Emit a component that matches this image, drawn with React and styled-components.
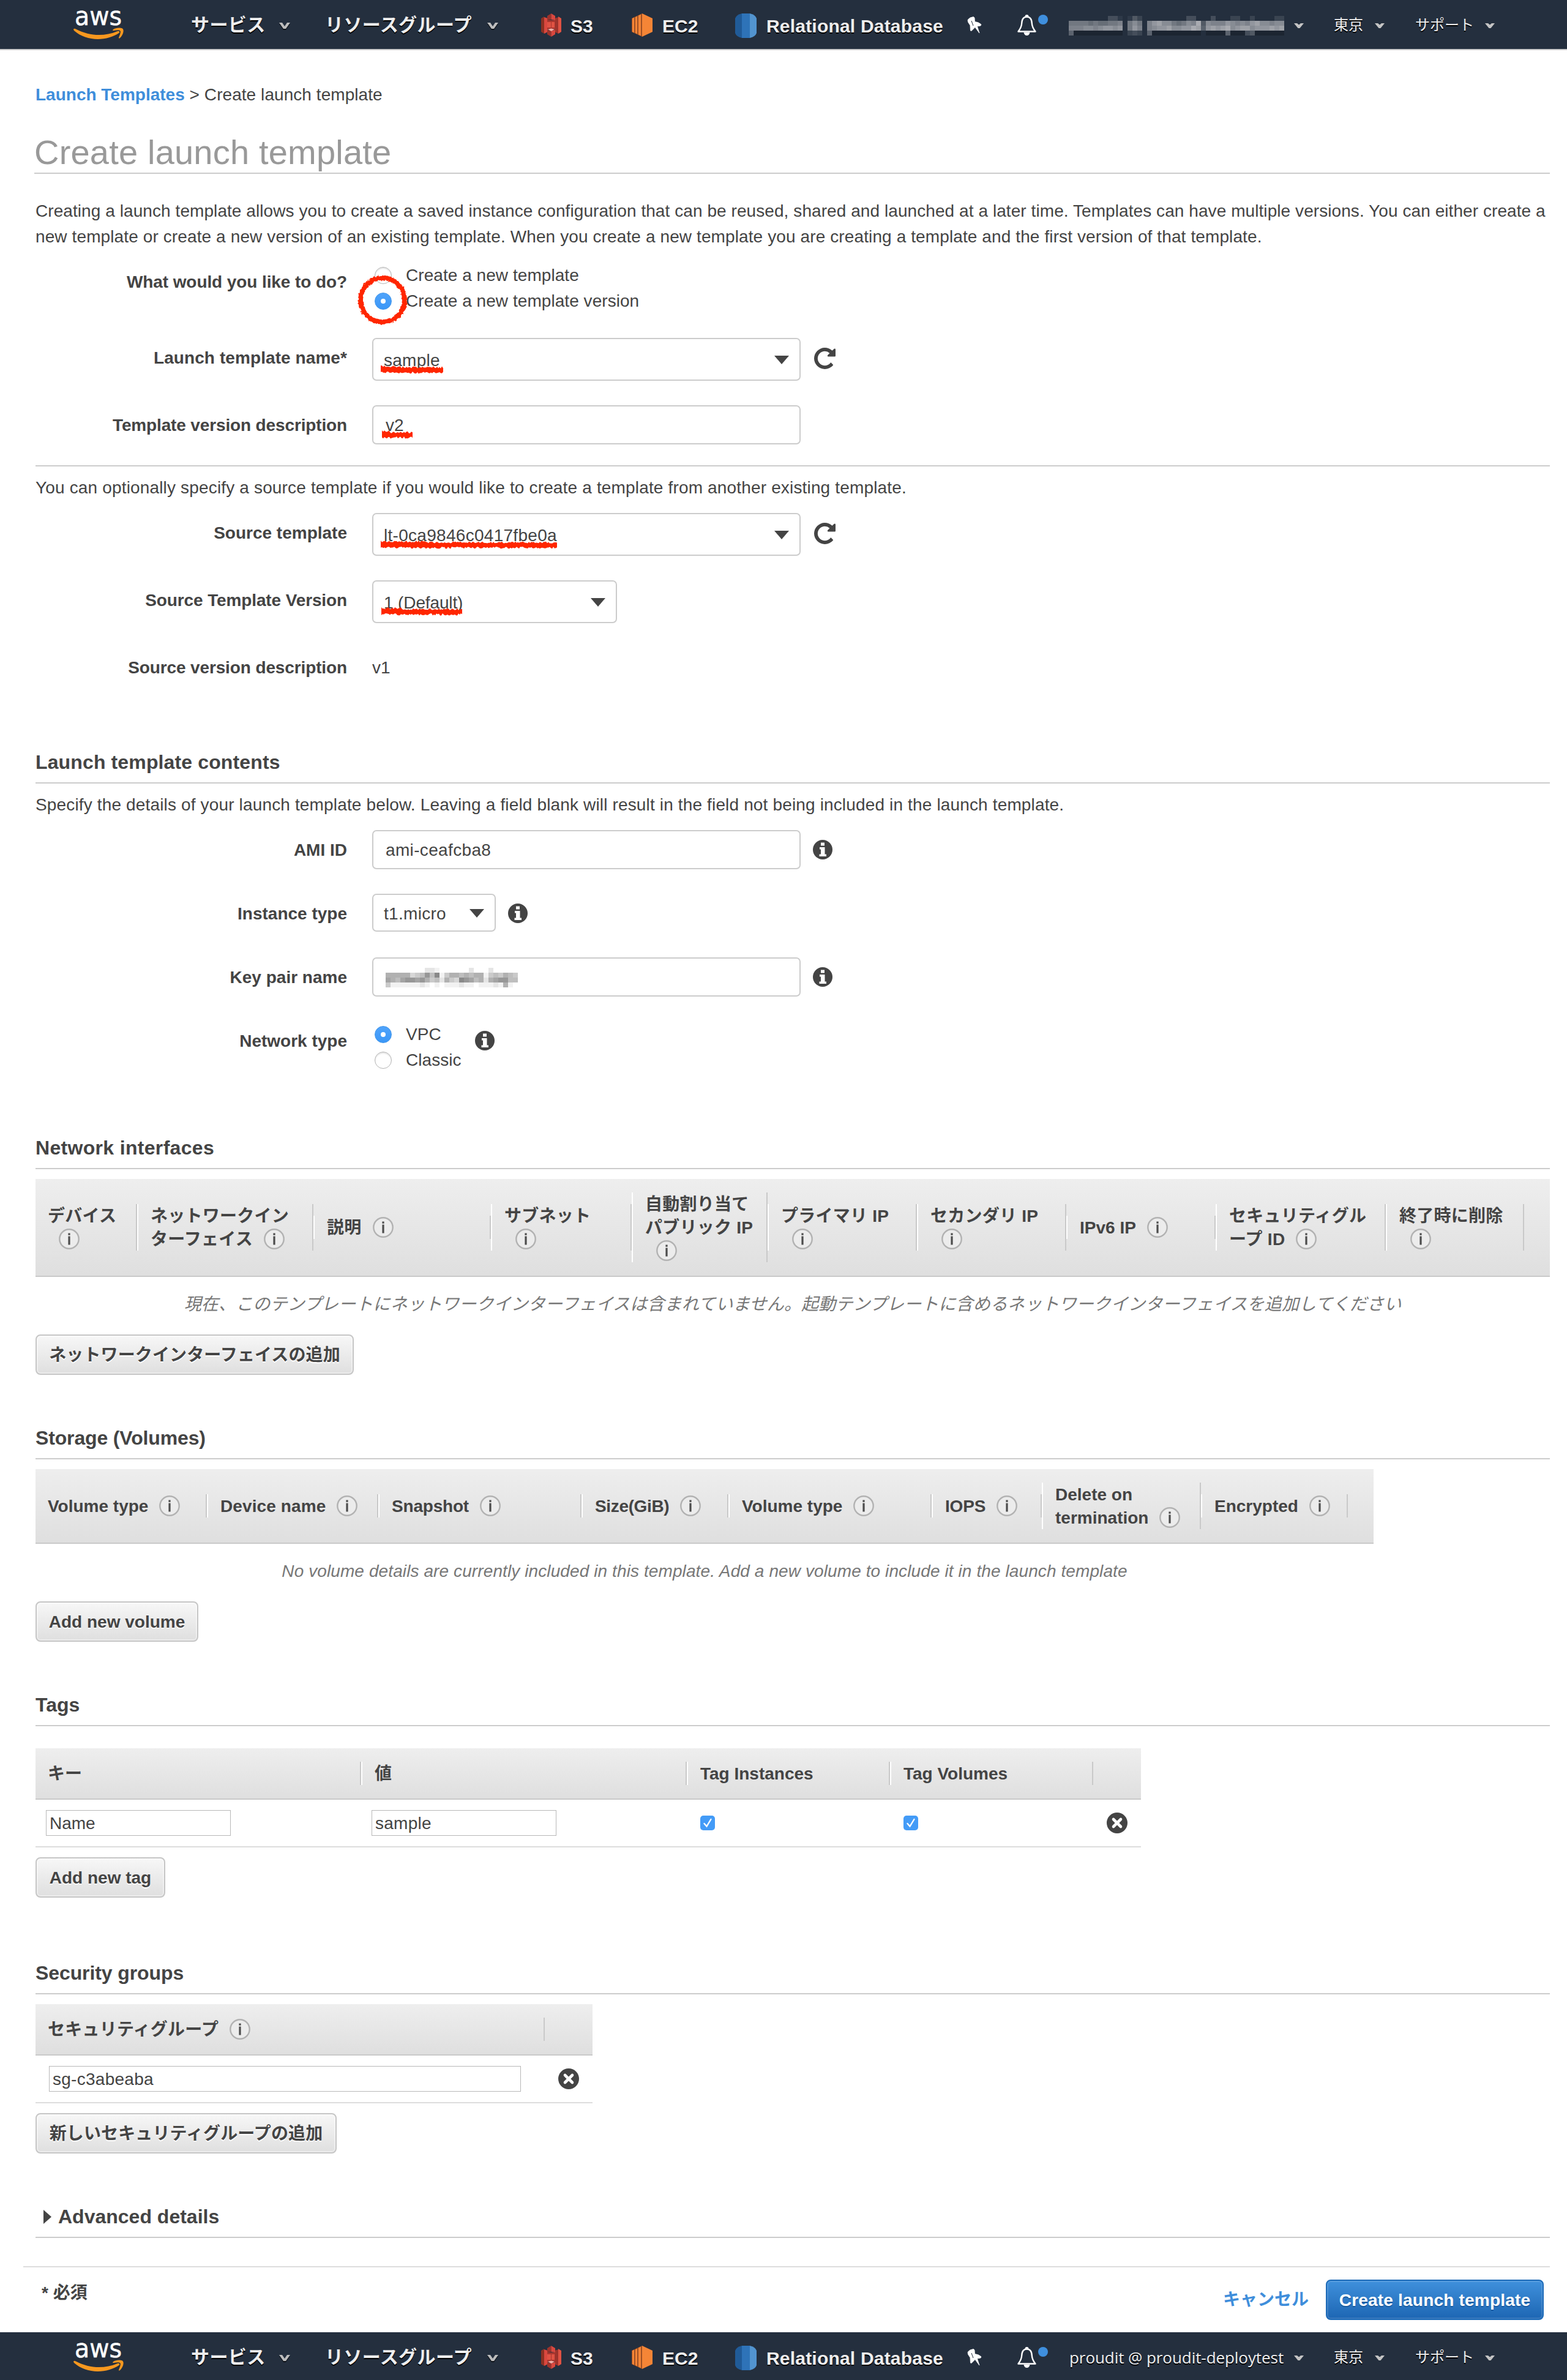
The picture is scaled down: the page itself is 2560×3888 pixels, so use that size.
import React from 'react';
import styled, { createGlobalStyle } from 'styled-components';

const sans = '"Liberation Sans", "Noto Sans CJK JP", Arial, sans-serif';

const GlobalStyle = createGlobalStyle`
  *, *::before, *::after { box-sizing: border-box; }
  body {
    margin: 0;
    background: #fff;
    color: #444;
    font: 28px/42px ${sans};
  }
`;

/* ---------- navigation ---------- */

const NavBar = styled.nav`
  height: ${(p) => (p.$footer ? 78 : 82)}px;
  overflow: hidden;
  background: #242f3e;
  border-bottom: ${(p) => (p.$footer ? 'none' : '2px solid #ccc')};
`;

const NavInner = styled.div`
  height: 80px;
  display: flex;
  align-items: center;
  padding-left: 120px;
  color: #eee;
`;

const NavItem = styled.div`
  display: flex;
  align-items: center;
  flex: none;
  gap: ${(p) => p.$gap || 0}px;
  margin-left: ${(p) => p.$ml || 0}px;
`;

const NavText = styled.span`
  width: ${(p) => p.$w}px;
  white-space: nowrap;
  font-size: 30px;
  line-height: 40px;
  font-weight: bold;
  letter-spacing: ${(p) => p.$ls || 0}px;
  padding-top: ${(p) => (p.$service ? 6 : 1)}px;
  text-shadow: 0 2px 0 #000;
`;

const NavSmall = styled(NavText)`
  font-size: 24px;
  font-weight: normal;
`;

const NavUser = styled(NavText)`
  font-family: "Open Sans", sans-serif;
  font-size: 26px;
  font-weight: normal;
  letter-spacing: -0.07px;
  padding-left: 1px;
`;

const Icon = styled.svg`
  display: block;
  flex: none;
  overflow: visible;
  margin-top: ${(p) => p.$mt || 0}px;
  margin-left: ${(p) => p.$ml || 0}px;
`;

const MosaicGrid = styled.div`
  display: grid;
  grid-template-columns: repeat(${(p) => p.$cols}, 8px);
  grid-auto-rows: 8px;
  width: ${(p) => p.$w}px;
  margin-top: ${(p) => p.$mt || 0}px;
`;

const Cell = styled.i`
  display: block;
`;

function Mosaic({ rows, rgb, w, mt, k = 15 }) {
  return (
    <MosaicGrid $cols={rows[0].length} $w={w} $mt={mt}>
      {rows.flatMap((row, y) =>
        row.split('').map((c, x) => (
          <Cell
            key={`${x}-${y}`}
            style={{
              background:
                c === 'x' ? 'rgba(0,0,0,.2)' : c === '.' ? 'transparent' : `rgba(${rgb},${parseInt(c, 16) / k})`,
            }}
          />
        ))
      )}
    </MosaicGrid>
  );
}

const userMosaic = [
  '........331.142.........33...3...22..2....22',
  '77776766778.797.8ab9976798c49888a9898ab99899',
  '8889989aa9a.7a8.89aab99aacb5ababc9abb9aaabab',
  '5xxxxxxxxxx.232.5xxxxxxxxxx.xxxx5xxx34xxxxxx',
];

const keyMosaic = [
  '........221......2...2.....',
  '666663458591466565661454654',
  '765788786452643987562678855',
  '411111121.1.111211.1112161.',
];

const Chevron = () => (
  <Icon $mt={6} width="18" height="12" viewBox="0 0 18 12">
    <path d="M0 2h5l4 6 4-6h5l-7 10H7z" fill="#000" opacity=".6" />
    <path d="M0 0h5l4 6 4-6h5l-7 10H7z" fill="#bdbdbd" />
  </Icon>
);

const SmallChevron = () => (
  <Icon $mt={4} width="16" height="9" viewBox="0 0 16 9">
    <path d="M0 0h5l3 2.500 3-2.500h5L9.500 8h-3z" fill="#c4c4c4" />
  </Icon>
);

const Logo = () => (
  <Icon width="82" height="48" viewBox="0 0 82 48">
    <text
      x="2"
      y="24.500"
      fill="#fff"
      stroke="#fff"
      strokeWidth="0.500"
      fontFamily='"DejaVu Sans", sans-serif'
      fontSize="43"
      textLength="77"
      lengthAdjust="spacingAndGlyphs"
    >
      aws
    </text>
    <g fill="#f7981f">
      <path d="M0 32Q1 30 4 31.500C26 43 50 44 72 35Q76 34 75 37.500C54 52 21 52 1 34Z" />
      <path d="M80 30.500C76 29 69 29 64.500 32.500Q63 34.500 66 34C71 33 75.500 33 76.500 34.500C77.500 36 76 41 74 45.500Q74 47.500 76 46C81 41.500 83.500 33 80 30.500Z" />
    </g>
  </Icon>
);

const S3Icon = () => (
  <Icon $mt={2} width="33" height="38" viewBox="0 0 33 38">
    <path d="M0 8l5-3v28l-5-3z" fill="#8c3123" />
    <path d="M33 8l-5-3v28l5-3z" fill="#e05243" />
    <path d="M5 6l6 2v22l-6 3z" fill="#d9483f" />
    <path d="M28 6l-6 2v22l6 3z" fill="#9c332c" />
    <path d="M16.500 0L10 4v7l6.500-1z" fill="#9c332c" />
    <path d="M16.500 0L23 4v7l-6.500-1z" fill="#d9483f" />
    <path d="M16.500 38L10 34v-7l6.500 1z" fill="#9c332c" />
    <path d="M16.500 38L23 34v-7l-6.500 1z" fill="#d9483f" />
    <path d="M10 11h13v15H10z" fill="#a8362f" />
    <path d="M10 14h6v9h-6zM17 14h5v9h-5z" fill="#e05243" />
    <path d="M11 26l5.500-1.500L22 26l-5.500 3z" fill="#efb1aa" />
  </Icon>
);

const Ec2Icon = () => (
  <Icon $mt={2} width="34" height="38" viewBox="0 0 34 38">
    <path d="M0 8l17-8v38L0 30z" fill="#9d5025" />
    <path d="M1 8l3-1.500v25L1 30zM6 6l3-1.500v29L6 32zM11 3.500L15 1.500v35l-4-2z" fill="#f58536" />
    <path d="M17 0l17 8v22l-17 8z" fill="#f58536" />
  </Icon>
);

const RdsIcon = () => (
  <Icon $mt={4} width="35" height="40" viewBox="0 0 35 40">
    <path d="M0 8Q2 2 11 0v40Q2 38 0 32z" fill="#205b98" />
    <path d="M35 8Q33 2 24 0v40q9-2 11-8z" fill="#5294cf" />
    <path d="M11 0h13v40H11z" fill="#2e73b8" />
  </Icon>
);

const PinIcon = () => (
  <Icon $mt={1} width="24" height="27" viewBox="0 0 24 27">
    <path
      d="M1 5.500Q4 1 10.500 0.500L12 2L12.500 8.500Q19 9 23 13L22 15L16.500 16L20 27L13 17.500L7 23.500L5.500 23L5 14.500L1.500 9Z"
      fill="#fff"
      stroke="#fff"
      strokeWidth="0.800"
      strokeLinejoin="round"
    />
    <path d="M7 7l3 8" stroke="#242f3e" strokeWidth="1" />
  </Icon>
);

const BellIcon = () => (
  <Icon $mt={2} width="50" height="34" viewBox="0 0 50 34">
    <path d="M13.500 3a2 2 0 0 1 4 0" fill="#fff" stroke="#fff" strokeWidth="2" />
    <path
      d="M15.500 3.500C9 3.500 7.500 8.500 7.200 14C7 20 5 23 1.500 27.500H29.500C26 23 24 20 23.800 14C23.500 8.500 22 3.500 15.500 3.500Z"
      fill="none"
      stroke="#fff"
      strokeWidth="2.400"
      strokeLinejoin="round"
    />
    <path d="M10.500 29h10q-1 5-5 5t-5-5z" fill="#fff" />
    <circle cx="42" cy="8" r="8" fill="#3f8fdd" />
  </Icon>
);

function Navigation({ footer }) {
  return (
    <NavBar $footer={footer}>
      <NavInner>
        <Logo />
        <NavItem $ml={110} $gap={24}>
          <NavText $w={120} $ls={0.4}>サービス</NavText>
          <Chevron />
        </NavItem>
        <NavItem $ml={57} $gap={24}>
          <NavText $w={241} $ls={0.4}>リソースグループ</NavText>
          <Chevron />
        </NavItem>
        <NavItem $ml={70} $gap={15}>
          <S3Icon />
          <NavText $w={38} $service>S3</NavText>
        </NavItem>
        <NavItem $ml={62} $gap={16}>
          <Ec2Icon />
          <NavText $w={59} $service>EC2</NavText>
        </NavItem>
        <NavItem $ml={60} $gap={16}>
          <RdsIcon />
          <NavText $w={288} $ls={0.2} $service>Relational Database</NavText>
        </NavItem>
        <NavItem $ml={40}>
          <PinIcon />
        </NavItem>
        <NavItem $ml={58}>
          <BellIcon />
        </NavItem>
        <NavItem $ml={34} $gap={16}>
          {footer ? (
            <NavUser $w={352}>proudit @ proudit-deploytest</NavUser>
          ) : (
            <Mosaic rows={userMosaic} rgb="214,214,216" w={352} mt={4} k={16} />
          )}
          <SmallChevron />
        </NavItem>
        <NavItem $ml={49} $gap={18}>
          <NavSmall $w={49}>東京</NavSmall>
          <SmallChevron />
        </NavItem>
        <NavItem $ml={50} $gap={18}>
          <NavSmall $w={96}>サポート</NavSmall>
          <SmallChevron />
        </NavItem>
      </NavInner>
    </NavBar>
  );
}

/* ---------- page ---------- */

const Main = styled.main`
  padding: 52px 28px 0 58px;
`;

const Breadcrumb = styled.div`
  height: 42px;
  letter-spacing: 0.06px;
  white-space: nowrap;
`;

const Link = styled.a`
  color: #3f8edb;
  font-weight: bold;
  letter-spacing: ${(p) => p.$ls || 0}px;
`;

const Title = styled.h1`
  margin: 41px 0 40px -2px;
  height: 67px;
  border-bottom: 2px solid #ccc;
  font-size: 56px;
  line-height: 64px;
  font-weight: normal;
  letter-spacing: 0.2px;
  color: #999;
`;

const Line = styled.div`
  white-space: nowrap;
  letter-spacing: ${(p) => p.$ls || 0}px;
`;

const Divider = styled.div`
  height: 2px;
  margin: 34px 0 14px;
  background: #ccc;
`;

const Form = styled.div`
  display: flex;
  flex-direction: column;
  gap: 40px;
  margin-top: 20px;
`;

const FormRow = styled.div`
  display: grid;
  grid-template-columns: 509px 1fr;
  column-gap: 41px;
  height: ${(p) => p.$h || 64}px;
`;

const Label = styled.label`
  padding-top: 12px;
  text-align: right;
  font-weight: bold;
  white-space: nowrap;
  letter-spacing: ${(p) => p.$ls || 0}px;
`;

const Control = styled.div`
  display: flex;
  align-items: flex-start;
`;

const Plain = styled.span`
  padding-top: 12px;
`;

const TextBox = styled.div`
  position: relative;
  width: 700px;
  height: 64px;
  display: flex;
  align-items: center;
  padding: 1px 0 0 20px;
  border: 2px solid #ccc;
  border-radius: 7px;
  background: #fff;
  letter-spacing: ${(p) => p.$ls || 0}px;
`;

const SelectBox = styled(TextBox)`
  width: ${(p) => p.$w || 700}px;
  height: ${(p) => p.$h || 70}px;
  padding: 3px 17px 0 17px;
  justify-content: space-between;
`;

const Arrow = () => (
  <Icon $mt={-2} width="24" height="14" viewBox="0 0 24 14">
    <path d="M0 0h24L12 14z" fill="#444" />
  </Icon>
);

const MarkerOverlay = styled.svg`
  position: absolute;
  left: ${(p) => p.$x}px;
  top: ${(p) => p.$y}px;
  overflow: visible;
  pointer-events: none;
`;

function scribble(w) {
  let seed = w * 7 + 3;
  const rnd = () => {
    seed = (seed * 16807) % 2147483647;
    return seed / 2147483647;
  };
  let top = 'M0 1';
  let bottom = '';
  for (let x = 0; x <= w; x += 2) {
    top += `L${x} ${(x < w * 0.25 ? -1 : 0.5) + rnd() * 3.2}`;
    bottom = `L${x} ${9 + rnd() * 3.5}${bottom}`;
  }
  return `${top}${bottom}Z`;
}

const Underline = ({ x, y, w }) => (
  <MarkerOverlay $x={x} $y={y} width={w} height="12">
    <path d={scribble(w)} fill="#ff2600" />
  </MarkerOverlay>
);

const Ring = () => (
  <MarkerOverlay $x={-24} $y={21} width="82" height="82" viewBox="0 0 82 82">
    <filter id="rough" x="-10%" y="-10%" width="120%" height="120%">
      <feTurbulence type="fractalNoise" baseFrequency="0.22" numOctaves="2" seed="4" />
      <feDisplacementMap in="SourceGraphic" scale="5" xChannelSelector="R" yChannelSelector="G" />
    </filter>
    <circle cx="41" cy="41" r="36" fill="none" stroke="#ff2600" strokeWidth="8" filter="url(#rough)" />
  </MarkerOverlay>
);

const RadioGroup = styled.div`
  position: relative;
  width: ${(p) => p.$w || 700}px;
`;

const RadioLine = styled.label`
  display: flex;
  align-items: center;
  height: 42px;
  gap: 23px;
  padding-left: 4px;
  white-space: nowrap;
  letter-spacing: 0.05px;
`;

const RadioDot = styled.span`
  width: 28px;
  height: 28px;
  margin-top: 2px;
  border-radius: 50%;
  display: grid;
  place-items: center;
  background: ${(p) => (p.$on ? 'linear-gradient(#4fa3fb, #3b97f7)' : '#fff')};
  border: ${(p) => (p.$on ? '1px solid #4296ea' : '1.5px solid #b4b4b4')};
  box-shadow: ${(p) => (p.$on ? 'none' : 'inset 0 2px 2px #e4e4e4')};

  &::after {
    content: '';
    width: 8px;
    height: 8px;
    border-radius: 50%;
    background: #fff;
  }
`;

const RadioText = styled.span`
  padding-top: 1px;
`;

const Radio = ({ on, children }) => (
  <RadioLine>
    <RadioDot $on={on} />
    <RadioText>{children}</RadioText>
  </RadioLine>
);

const Refresh = () => (
  <Icon $ml={22} $mt={16} width="35" height="35" viewBox="0 0 1536 1536">
    <path
      fill="#444"
      d="M1536 128v448q0 26-19 45t-45 19h-448q-42 0-59-40-17-39 14-69l138-138q-148-137-349-137-104 0-198.500 40.500t-163.500 109.500-109.500 163.500-40.500 198.500 40.500 198.500 109.500 163.500 163.500 109.500 198.500 40.500q119 0 225-52t179-147q7-10 23-12 15 0 25 9l137 138q9 8 9.500 20.500t-7.500 22.500q-109 132-264 204.500t-327 72.500q-156 0-298-61t-245-164-164-245-61-298 61-298 164-245 245-164 298-61q147 0 284.500 55.500t244.500 156.500l130-129q29-31 70-14 39 17 39 59z"
    />
  </Icon>
);

const InfoDark = () => (
  <Icon $ml={20} $mt={16} width="32" height="32" viewBox="0 0 32 32">
    <circle cx="16" cy="16" r="16" fill="#444" />
    <path d="M13 4.500h6v5h-6zM11 12h8.500v11.500H22v3.500H10.500v-3.500H13v-8h-2z" fill="#fff" />
  </Icon>
);

const InfoLight = () => (
  <Icon $ml={18} width="34" height="34" viewBox="0 0 34 34">
    <circle cx="17" cy="17" r="15.700" fill="#ececec" stroke="#b2b2b2" strokeWidth="2.400" />
    <path d="M15.400 7.500h3.200v3.200h-3.200zM15.400 12.500h3.200v14h-3.200z" fill="#4c4c4c" />
  </Icon>
);

const Remove = () => (
  <Icon width="34" height="34" viewBox="0 0 34 34">
    <circle cx="17" cy="17" r="17" fill="#444" />
    <path d="M11 11l12 12M23 11l-12 12" stroke="#fff" strokeWidth="4.600" strokeLinecap="round" />
  </Icon>
);

/* ---------- sections and tables ---------- */

const Section = styled.section`
  margin-top: ${(p) => p.$gap}px;
`;

const SectionTitle = styled.h2`
  display: flex;
  align-items: flex-start;
  height: 57px;
  margin: 0;
  border-bottom: 2px solid #ccc;
  font-size: 32px;
  line-height: 44px;
  letter-spacing: ${(p) => p.$ls || 0}px;
`;

const Table = styled.div`
  width: ${(p) => p.$w}px;
  margin-top: ${(p) => p.$mt || 16}px;
`;

const HeadRow = styled.div`
  display: flex;
  align-items: center;
  height: ${(p) => p.$h}px;
  background: linear-gradient(#eee, #dfdfdf);
  border-bottom: 2px solid #c9c9c9;
`;

const HeadCell = styled.div`
  flex: none;
  width: ${(p) => p.$w}px;
  padding-left: 20px;
  border-right: 2px solid #c9c9c9;
  font-weight: bold;
  white-space: nowrap;
  letter-spacing: ${(p) => p.$ls || 0}px;

  & + & {
    border-left: 2px solid #fff;
  }
`;

const HeadLine = styled.div`
  display: flex;
  align-items: center;
  height: 38px;
  line-height: 38px;
`;

const HeadText = styled.span`
  padding-top: 2px;
`;

function Head({ h, cols, ls = 0 }) {
  return (
    <HeadRow $h={h}>
      {cols.map(([w, lines, info, own], i) => (
        <HeadCell key={i} $w={w} $ls={own ?? ls}>
          {lines.map((text, j) => (
            <HeadLine key={j}>
              <HeadText>{text}</HeadText>
              {info && j === lines.length - 1 && <InfoLight />}
            </HeadLine>
          ))}
        </HeadCell>
      ))}
    </HeadRow>
  );
}

const Empty = styled.div`
  height: 78px;
  padding-top: 24px;
  text-align: center;
  white-space: nowrap;
  font-style: italic;
  color: #777;
  letter-spacing: ${(p) => p.$ls || 0}px;
`;

const BodyRow = styled.div`
  display: flex;
  align-items: center;
  height: 78px;
  border-bottom: 2px solid #ddd;
`;

const BodyCell = styled.div`
  flex: none;
  width: ${(p) => p.$w}px;
  padding-left: ${(p) => p.$pl || 22}px;
`;

const Field = styled.div`
  width: ${(p) => p.$w}px;
  height: 42px;
  padding: 1px 0 0 5px;
  line-height: 40px;
  border: 1px solid #b8b8b8;
  letter-spacing: ${(p) => p.$ls || 0}px;
`;

const Check = () => (
  <Icon width="24" height="24" viewBox="0 0 24 24">
    <rect width="24" height="24" rx="5" fill="#439bf7" />
    <path d="M6.500 13l4 4.500 7-11.500" fill="none" stroke="#fff" strokeWidth="2.400" strokeLinecap="round" />
  </Icon>
);

const Button = styled.button`
  display: block;
  width: ${(p) => p.$w}px;
  height: 66px;
  margin-top: ${(p) => (p.$primary ? 0 : 16)}px;
  padding: 2px 0 0;
  border: 2px solid ${(p) => (p.$primary ? '#1e6bb8' : '#c6c6c6')};
  border-radius: 8px;
  background: ${(p) => (p.$primary ? 'linear-gradient(#3f90dc, #1d66b3)' : 'linear-gradient(#f7f7f7, #dfdfdf)')};
  box-shadow: inset 0 0 0 2px ${(p) => (p.$primary ? 'rgba(255,255,255,.12)' : 'rgba(255,255,255,.4)')};
  color: ${(p) => (p.$primary ? '#fff' : '#444')};
  text-shadow: 0 2px 0 ${(p) => (p.$primary ? '#1a5a9e' : '#fff')};
  font: bold 28px/42px ${sans};
  letter-spacing: ${(p) => p.$ls || 0}px;
  white-space: nowrap;
`;

const Caret = () => (
  <Icon $ml={13} $mt={11} width="13" height="23" viewBox="0 0 13 23">
    <path d="M0 0l13 11.500L0 23z" fill="#444" />
  </Icon>
);

const AdvancedText = styled.span`
  margin-left: 11px;
`;

const Footer = styled.footer`
  display: flex;
  justify-content: space-between;
  align-items: flex-start;
  height: 108px;
  margin: 46px 0 0 -20px;
  padding: 20px 10px 0 30px;
  border-top: 2px solid #ddd;
`;

const Required = styled.strong`
  margin-top: 1px;
`;

const Actions = styled.div`
  display: flex;
  align-items: center;
  gap: 28px;
`;

export default function App() {
  return (
    <>
      <GlobalStyle />
      <Navigation />
      <Main>
        <Breadcrumb>
          <Link>Launch Templates</Link> &gt; Create launch template
        </Breadcrumb>
        <Title>Create launch template</Title>
        <Line $ls={0.072}>
          Creating a launch template allows you to create a saved instance configuration that can be reused, shared and
          launched at a later time. Templates can have multiple versions. You can either create a
        </Line>
        <Line $ls={0.11}>
          new template or create a new version of an existing template. When you create a new template you are creating
          a template and the first version of that template.
        </Line>

        <Form>
          <FormRow $h={84}>
            <Label $ls={-0.09}>What would you like to do?</Label>
            <Control>
              <RadioGroup>
                <Radio>Create a new template</Radio>
                <Radio on>Create a new template version</Radio>
                <Ring />
              </RadioGroup>
            </Control>
          </FormRow>
          <FormRow $h={70}>
            <Label $ls={0.08}>Launch template name*</Label>
            <Control>
              <SelectBox $ls={0.25}>
                sample
                <Arrow />
                <Underline x={12} y={44} w={103} />
              </SelectBox>
              <Refresh />
            </Control>
          </FormRow>
          <FormRow>
            <Label $ls={-0.14}>Template version description</Label>
            <Control>
              <TextBox>
                v2
                <Underline x={14} y={40} w={50} />
              </TextBox>
            </Control>
          </FormRow>
        </Form>

        <Divider />
        <Line $ls={0.161}>
          You can optionally specify a source template if you would like to create a template from another existing
          template.
        </Line>

        <Form>
          <FormRow $h={70}>
            <Label>Source template</Label>
            <Control>
              <SelectBox $ls={0.287}>
                lt-0ca9846c0417fbe0a
                <Arrow />
                <Underline x={12} y={44} w={289} />
              </SelectBox>
              <Refresh />
            </Control>
          </FormRow>
          <FormRow $h={70}>
            <Label $ls={-0.12}>Source Template Version</Label>
            <Control>
              <SelectBox $w={400} $ls={-0.13}>
                1 (Default)
                <Arrow />
                <Underline x={13} y={43} w={133} />
              </SelectBox>
            </Control>
          </FormRow>
          <FormRow $h={53}>
            <Label $ls={-0.12}>Source version description</Label>
            <Plain>v1</Plain>
          </FormRow>
        </Form>

        <Section $gap={112}>
          <SectionTitle $ls={0.13}>Launch template contents</SectionTitle>
          <Table $mt={14}>
            <Line $ls={0.15}>
              Specify the details of your launch template below. Leaving a field blank will result in the field not
              being included in the launch template.
            </Line>
          </Table>
          <Form>
            <FormRow>
              <Label>AMI ID</Label>
              <Control>
                <TextBox $ls={0.35}>ami-ceafcba8</TextBox>
                <InfoDark />
              </Control>
            </FormRow>
            <FormRow>
              <Label>Instance type</Label>
              <Control>
                <SelectBox $w={202} $h={62} $ls={0.3}>
                  t1.micro
                  <Arrow />
                </SelectBox>
                <InfoDark />
              </Control>
            </FormRow>
            <FormRow>
              <Label>Key pair name</Label>
              <Control>
                <TextBox>
                  <Mosaic rows={keyMosaic} rgb="20,20,20" w={216} mt={1} k={18} />
                </TextBox>
                <InfoDark />
              </Control>
            </FormRow>
            <FormRow $h={84}>
              <Label>Network type</Label>
              <Control>
                <RadioGroup $w={148}>
                  <Radio on>VPC</Radio>
                  <Radio>Classic</Radio>
                </RadioGroup>
                <InfoDark />
              </Control>
            </FormRow>
          </Form>
        </Section>

        <Section $gap={101}>
          <SectionTitle $ls={0.32}>Network interfaces</SectionTitle>
          <Table $w={2474}>
            <Head
              h={160}
              ls={0.25}
              cols={[
                [166, ['デバイス', ''], true],
                [288, ['ネットワークイン', 'ターフェイス'], true],
                [290, ['説明'], true],
                [230, ['サブネット', ''], true],
                [222, ['自動割り当て', 'パブリック IP', ''], true],
                [244, ['プライマリ IP', ''], true],
                [244, ['セカンダリ IP', ''], true],
                [244, ['IPv6 IP'], true, 0],
                [278, ['セキュリティグル', 'ープ ID'], true],
                [226, ['終了時に削除', ''], true],
              ]}
            />
            <Empty $ls={0.15}>
              現在、このテンプレートにネットワークインターフェイスは含まれていません。起動テンプレートに含めるネットワークインターフェイスを追加してください
            </Empty>
          </Table>
          <Button $w={520} $ls={0.12}>ネットワークインターフェイスの追加</Button>
        </Section>

        <Section $gap={81}>
          <SectionTitle $ls={-0.15}>Storage (Volumes)</SectionTitle>
          <Table $w={2186}>
            <Head
              h={122}
              cols={[
                [280, ['Volume type'], true],
                [280, ['Device name'], true, 0.1],
                [332, ['Snapshot'], true, -0.2],
                [240, ['Size(GiB)'], true, -0.35],
                [332, ['Volume type'], true],
                [180, ['IOPS'], true, -0.2],
                [260, ['Delete on', 'termination'], true],
                [240, ['Encrypted'], true],
              ]}
            />
            <Empty $ls={0.1}>
              No volume details are currently included in this template. Add a new volume to include it in the launch
              template
            </Empty>
          </Table>
          <Button $w={266}>Add new volume</Button>
        </Section>

        <Section $gap={81}>
          <SectionTitle>Tags</SectionTitle>
          <Table $w={1806} $mt={36}>
            <Head
              h={84}
              cols={[
                [532, ['キー']],
                [532, ['値']],
                [332, ['Tag Instances']],
                [332, ['Tag Volumes']],
              ]}
            />
            <BodyRow>
              <BodyCell $w={532} $pl={17}>
                <Field $w={302}>Name</Field>
              </BodyCell>
              <BodyCell $w={532} $pl={17}>
                <Field $w={302} $ls={0.25}>sample</Field>
              </BodyCell>
              <BodyCell $w={332}>
                <Check />
              </BodyCell>
              <BodyCell $w={332}>
                <Check />
              </BodyCell>
              <BodyCell $w={78}>
                <Remove />
              </BodyCell>
            </BodyRow>
          </Table>
          <Button $w={212}>Add new tag</Button>
        </Section>

        <Section $gap={101}>
          <SectionTitle $ls={-0.1}>Security groups</SectionTitle>
          <Table $w={910}>
            <Head h={84} ls={0.25} cols={[[832, ['セキュリティグループ'], true]]} />
            <BodyRow>
              <BodyCell $w={832}>
                <Field $w={771} $ls={0.27}>sg-c3abeaba</Field>
              </BodyCell>
              <BodyCell $w={78}>
                <Remove />
              </BodyCell>
            </BodyRow>
          </Table>
          <Button $w={492} $ls={0.12}>新しいセキュリティグループの追加</Button>
        </Section>

        <Section $gap={81}>
          <SectionTitle>
            <Caret />
            <AdvancedText>Advanced details</AdvancedText>
          </SectionTitle>
        </Section>

        <Footer>
          <Required>* 必須</Required>
          <Actions>
            <Link>キャンセル</Link>
            <Button $w={356} $ls={0.2} $primary>
              Create launch template
            </Button>
          </Actions>
        </Footer>
      </Main>
      <Navigation footer />
    </>
  );
}
